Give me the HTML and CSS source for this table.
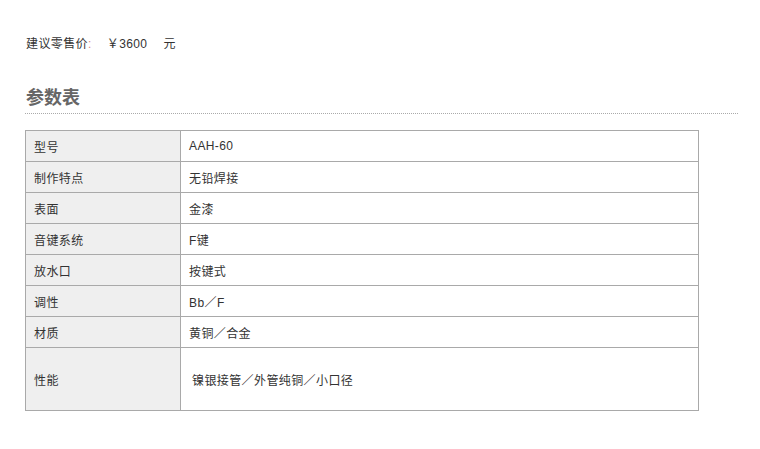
FILE: index.html
```html
<!DOCTYPE html>
<html lang="zh">
<head>
<meta charset="utf-8">
<title>参数表</title>
<link rel="stylesheet" href="styles.css">
</head>
<body>
<div class="page">
  <p class="price">建议零售价<span class="colon">:</span><span class="amount">￥3600</span><span class="unit">元</span></p>
  <h2 class="section-title">参数表</h2>
  <table class="spec">
    <tr><th>型号</th><td>AAH-60</td></tr>
    <tr><th>制作特点</th><td>无铅焊接</td></tr>
    <tr><th>表面</th><td>金漆</td></tr>
    <tr><th>音键系统</th><td>F键</td></tr>
    <tr><th>放水口</th><td>按键式</td></tr>
    <tr><th>调性</th><td>Bb／F</td></tr>
    <tr><th>材质</th><td>黄铜／合金</td></tr>
    <tr class="tall"><th>性能</th><td><span class="indent">镍银接管／外管纯铜／小口径</span></td></tr>
  </table>
</div>
</body>
</html>
```
FILE: styles.css
```css
html, body {
  margin: 0;
  padding: 0;
  background: #fff;
}
body {
  font-family: "Liberation Sans", "Noto Sans CJK SC", sans-serif;
  font-size: 12px;
  color: #333;
}
.page {
  padding: 36px 22px 0 25px;
}
.price {
  margin: 0;
  line-height: 16px;
  padding-left: 1px;
  letter-spacing: 0.4px;
}
.colon {
  color: #d88;
  margin-right: 15px;
}
.amount {
  margin-right: 16px;
}
.section-title {
  margin: 34px 0 0 0;
  font-size: 18px;
  line-height: 24px;
  font-weight: bold;
  color: #666;
  padding: 0 0 3px 1px;
  border-bottom: 1px dotted #aaa;
}
.spec {
  margin-top: 16px;
  border-collapse: collapse;
  width: 674px;
  border: 1px solid #a9a9a9;
}
.spec th, .spec td {
  border: 1px solid #a9a9a9;
  padding: 0 0 0 8px;
  text-align: left;
  font-weight: normal;
  color: #333;
  box-sizing: border-box;
  height: 31px;
  letter-spacing: 0.4px;
}
.spec th {
  width: 155px;
  background: #efefef;
}
.spec td {
  background: #fff;
}
.spec tr.tall th, .spec tr.tall td {
  height: 63px;
}
.indent {
  padding-left: 3px;
}
```
